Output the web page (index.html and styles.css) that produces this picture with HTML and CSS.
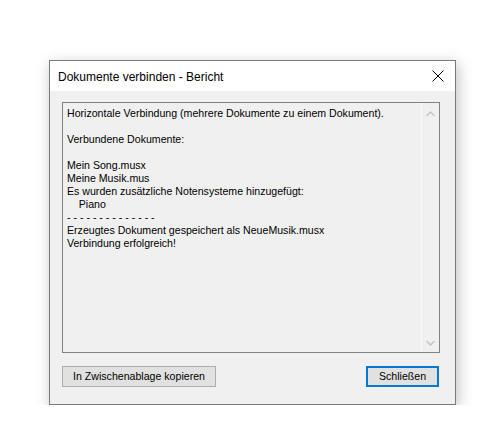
FILE: index.html
```html
<!DOCTYPE html>
<html lang="de">
<head>
    <meta charset="UTF-8">
    <title>Dokumente verbinden - Bericht</title>
    <link rel="stylesheet" href="styles.css">
</head>
<body>
    <div class="window">
        <div class="titlebar">
            <span class="title">Dokumente verbinden - Bericht</span>
            <svg class="close-x" width="12" height="12" viewBox="0 0 12 12">
                <path d="M0.5 0.5 L11.5 11.5 M11.5 0.5 L0.5 11.5" stroke="#000" stroke-width="1" fill="none"/>
            </svg>
        </div>
        <div class="content">
            <div class="report">
                <div class="report-text">Horizontale Verbindung (mehrere Dokumente zu einem Dokument).

Verbundene Dokumente:

Mein Song.musx
Meine Musik.mus
Es wurden zusätzliche Notensysteme hinzugefügt:
    Piano
- - - - - - - - - - - - - -
Erzeugtes Dokument gespeichert als NeueMusik.musx
Verbindung erfolgreich!</div>
                <div class="scrollbar">
                    <svg width="9" height="6" viewBox="0 0 9 6"><path d="M0.5 5 L4.5 1 L8.5 5" stroke="#c3c3c3" stroke-width="1.4" fill="none"/></svg>
                    <svg width="9" height="6" viewBox="0 0 9 6"><path d="M0.5 1 L4.5 5 L8.5 1" stroke="#c3c3c3" stroke-width="1.4" fill="none"/></svg>
                </div>
            </div>
            <div class="buttons">
                <div class="btn btn-copy">In Zwischenablage kopieren</div>
                <div class="btn btn-default">Schließen</div>
            </div>
        </div>
    </div>
</body>
</html>
```

FILE: styles.css
```css
body {
    margin: 0;
    background-color: #ffffff;
    font-family: "Liberation Sans", sans-serif;
    font-size: 11px;
    color: #000;
}

.window {
    margin: 60px 0 0 49px;
    width: 405px;
    border: 1px solid #7a7a7a;
    background-color: #f0f0f0;
    box-shadow: 2px 4px 14px rgba(0, 0, 0, 0.25);
}

.titlebar {
    height: 30px;
    background-color: #ffffff;
    display: flex;
    align-items: center;
    justify-content: space-between;
    padding: 0 11px 0 8px;
}

.title {
    font-size: 12px;
    padding-top: 1px;
}

.content {
    padding: 11px 15px 17px 12px;
}

.report {
    height: 249px;
    border: 1px solid #828282;
    display: flex;
    background-color: #f0f0f0;
}

.report-text {
    flex: 1;
    white-space: pre;
    font-size: 10.6px;
    line-height: 13px;
    padding: 4px 4px;
}

.scrollbar {
    width: 17px;
    border-left: 1px solid #f9f9f9;
    display: flex;
    flex-direction: column;
    justify-content: space-between;
    align-items: center;
    padding: 8px 0 6px;
}

.buttons {
    display: flex;
    justify-content: space-between;
    margin-top: 13px;
}

.btn {
    height: 19px;
    border: 1px solid #adadad;
    background-color: #e1e1e1;
    font-size: 10.6px;
    line-height: 19px;
    text-align: center;
}

.btn-copy {
    width: 152px;
}

.btn-default {
    width: 69px;
    border: 2px solid #0078d7;
    height: 17px;
    line-height: 17px;
    margin-right: 1px;
}
```
